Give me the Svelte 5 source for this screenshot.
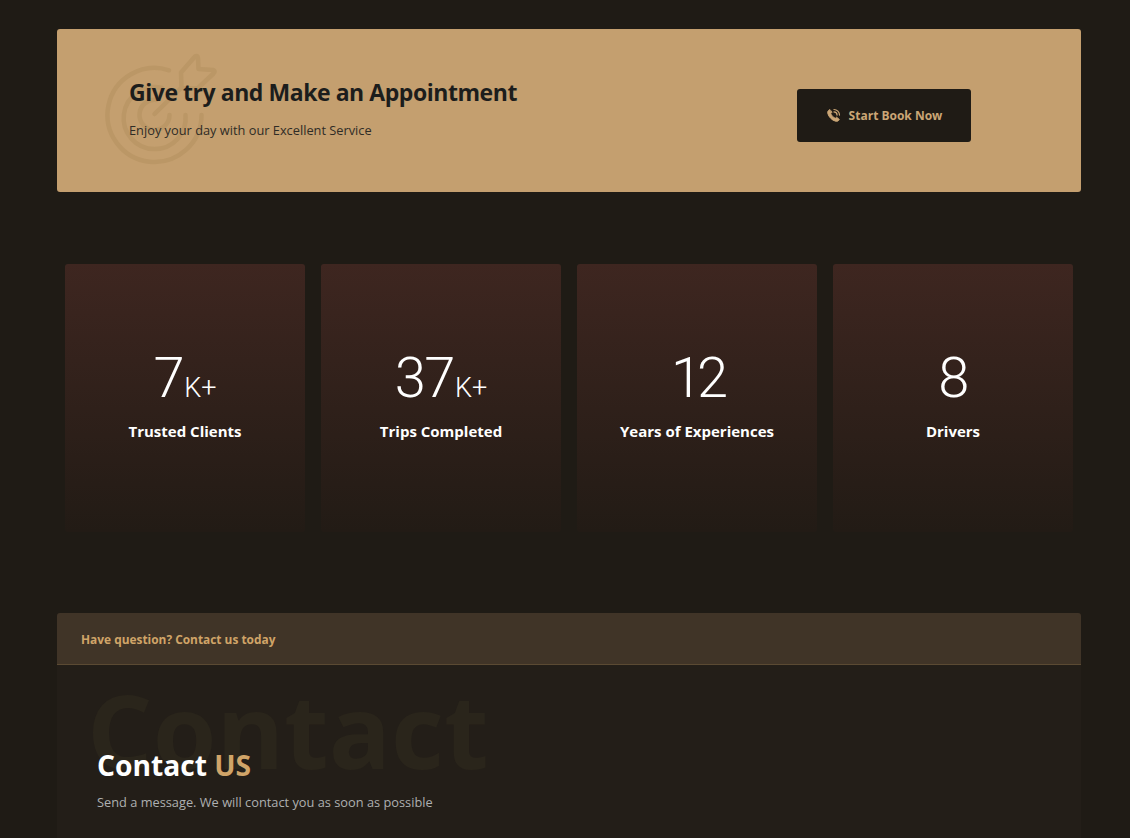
<script>
	const stats = [
		{ value: "7", suffix: "K+", label: "Trusted Clients" },
		{ value: "37", suffix: "K+", label: "Trips Completed" },
		{ value: "12", suffix: "", label: "Years of Experiences", tight: true },
		{ value: "8", suffix: "", label: "Drivers" }
	];
</script>

<div class="page">
	<section class="banner">
		<svg class="target" viewBox="0 0 120 120" fill="none" stroke="currentColor" stroke-width="4.500" stroke-linecap="round" stroke-linejoin="round">
			<path d="M69 20.300A47 47 0 1 0 101.500 65" />
			<path d="M62 38A31 31 0 1 0 85.500 65" />
			<path d="M56.500 50A15 15 0 1 0 69.500 65" />
			<path d="M54.500 64L80 39" />
			<path d="M81 22.500L95 6.500Q97.500 5 98 8L98.500 19L113 20Q116 21 113.500 23.500L97.500 38.500L81.500 38Z" />
		</svg>
		<div class="banner-text">
			<h2>Give try and Make an Appointment</h2>
			<p>Enjoy your day with our Excellent Service</p>
		</div>
		<a class="book" href="#book">
			<svg viewBox="0 0 16 16" width="15" height="15" fill="none" stroke="currentColor" stroke-linecap="round">
				<path d="M3.800 1.800C2.200 2.600 1.400 4 1.900 5.800C2.900 9.600 6.300 13 10.200 14.100C12 14.600 13.400 13.800 14.200 12.200L11.300 9.800L9.900 11C8 10.100 5.900 8 5 6.100L6.200 4.700Z" fill="currentColor" stroke-width="1" stroke-linejoin="round" />
				<path d="M8.500 1.600A6 6 0 0 1 14.400 7.500" stroke-width="1.300" />
				<path d="M8.500 4.200A3.400 3.400 0 0 1 11.800 7.500" stroke-width="1.300" />
			</svg>
			<span>Start Book Now</span>
		</a>
	</section>

	<section class="stats">
		{#each stats as stat}
			<div class="card">
				<div class="num" class:tight={stat.tight}>{stat.value}{#if stat.suffix}<small>{stat.suffix}</small>{/if}</div>
				<div class="label">{stat.label}</div>
			</div>
		{/each}
	</section>

	<section class="contact">
		<div class="contact-head">Have question? Contact us today</div>
		<div class="contact-body">
			<div class="ghost">Contact</div>
			<h2>Contact <span>US</span></h2>
			<p>Send a message. We will contact you as soon as possible</p>
		</div>
	</section>
</div>

<style>
	:global(body) {
		background: #1f1b15;
		font-family: "Open Sans", "Noto Sans", sans-serif;
	}

	.page {
		height: 838px;
		overflow: hidden;
		box-sizing: border-box;
		padding: 29px 49px 0 57px;
		display: flex;
		flex-direction: column;
	}

	.banner {
		position: relative;
		height: 163px;
		flex: none;
		display: flex;
		align-items: center;
		background: #c49f6f;
		border-radius: 3px;
		padding-left: 72px;
	}

	.target {
		position: absolute;
		left: 43px;
		top: 21px;
		width: 120px;
		height: 120px;
		color: #bb9766;
	}

	.banner-text {
		position: relative;
		flex: 1;
		margin-top: -7px;
	}

	.banner h2 {
		margin: 0;
		font-size: 23px;
		line-height: 32px;
		font-weight: 700;
		letter-spacing: -0.450px;
		color: #1c1d1c;
	}

	.banner p {
		margin: 13px 0 0;
		font-size: 12.800px;
		line-height: 18px;
		color: #2f2c26;
	}

	.book {
		display: flex;
		align-items: center;
		justify-content: center;
		gap: 8px;
		width: 174px;
		height: 53px;
		margin-right: 110px;
		margin-top: 10px;
		box-sizing: border-box;
		background: #1f1b15;
		border-radius: 3px;
		color: #cba675;
		font-size: 12px;
		font-weight: 700;
		text-decoration: none;
	}

	.stats {
		display: grid;
		grid-template-columns: repeat(4, 240px);
		gap: 16px;
		margin: 72px 8px 0;
		flex: none;
	}

	.card {
		height: 268px;
		box-sizing: border-box;
		padding-top: 82px;
		text-align: center;
		border-radius: 3px;
		background: linear-gradient(180deg, #3e2620 0%, #221b15 100%);
		color: #fff;
	}

	.num {
		font-family: "Roboto", sans-serif;
		font-weight: 300;
		font-size: 56px;
		line-height: 64px;
		letter-spacing: -1.500px;
	}

	.num.tight {
		letter-spacing: -5px;
	}

	.num small {
		font-size: 27px;
		line-height: 0;
		letter-spacing: 0;
		margin-left: 1px;
	}

	.label {
		margin-top: 10px;
		font-size: 15px;
		line-height: 22px;
		font-weight: 700;
	}

	.contact {
		margin-top: 81px;
		flex: 1;
		display: flex;
		flex-direction: column;
		border-radius: 3px 3px 0 0;
		background: #231e18;
	}

	.contact-head {
		height: 52px;
		flex: none;
		box-sizing: border-box;
		padding-left: 24px;
		display: flex;
		align-items: center;
		background: #403427;
		border-bottom: 1px solid #5b4a33;
		border-radius: 3px 3px 0 0;
		color: #d0a468;
		font-size: 11.900px;
		font-weight: 700;
	}

	.contact-body {
		position: relative;
		flex: 1;
		padding: 79px 40px 0;
	}

	.ghost {
		position: absolute;
		left: 30px;
		top: 4px;
		font-size: 103px;
		line-height: 120px;
		font-weight: 700;
		color: #2a251b;
	}

	.contact-body h2 {
		position: relative;
		margin: 0;
		font-size: 28.200px;
		line-height: 42px;
		font-weight: 700;
		color: #fff;
	}

	.contact-body h2 span {
		color: #d0a468;
	}

	.contact-body p {
		position: relative;
		margin: 6px 0 0;
		font-size: 12.800px;
		line-height: 20px;
		color: #aeb0b0;
	}
</style>
